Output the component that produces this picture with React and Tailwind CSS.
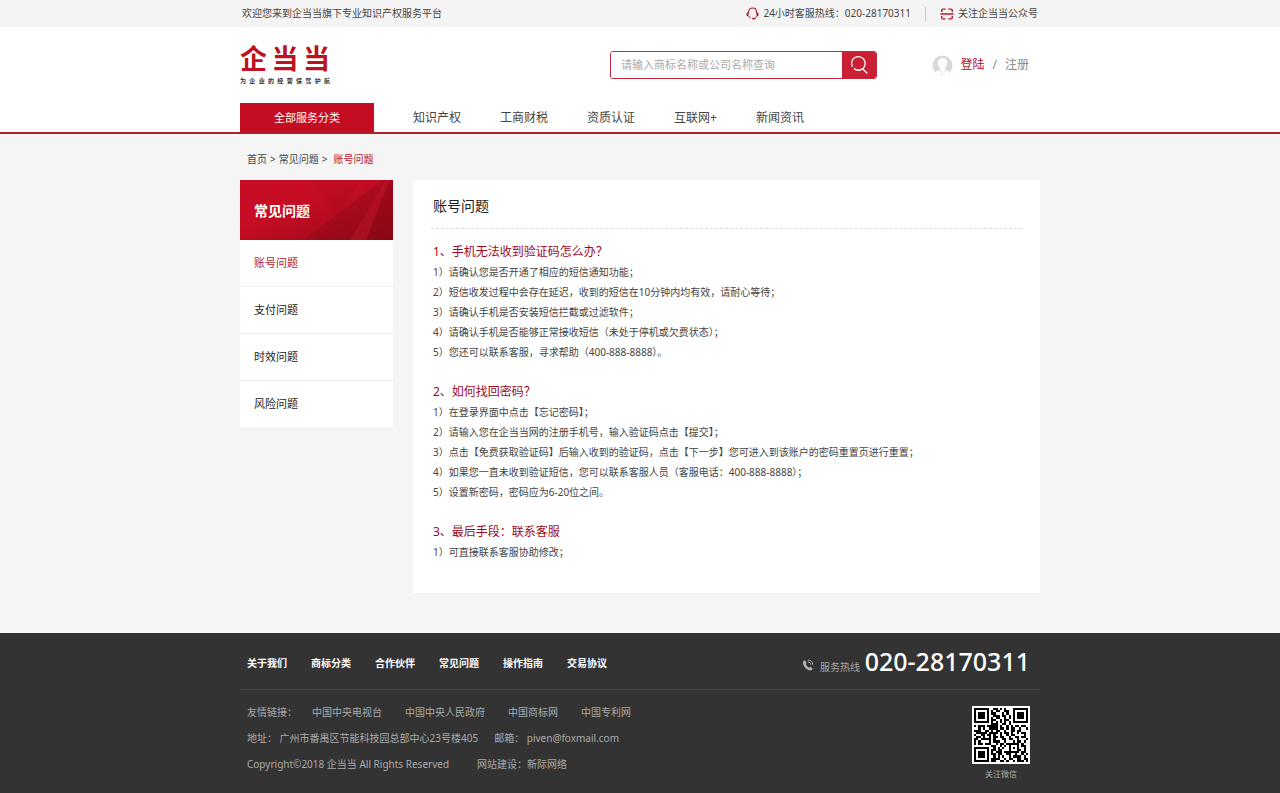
const NAV = ["知识产权", "工商财税", "资质认证", "互联网+", "新闻资讯"];

const SIDE = ["账号问题", "支付问题", "时效问题", "风险问题"];

const FAQ = [
  {
    title: "1、手机无法收到验证码怎么办？",
    items: [
      "1）请确认您是否开通了相应的短信通知功能；",
      "2）短信收发过程中会存在延迟，收到的短信在10分钟内均有效，请耐心等待；",
      "3）请确认手机是否安装短信拦截或过滤软件；",
      "4）请确认手机是否能够正常接收短信（未处于停机或欠费状态）；",
      "5）您还可以联系客服，寻求帮助（400-888-8888）。",
    ],
  },
  {
    title: "2、如何找回密码？",
    items: [
      "1）在登录界面中点击【忘记密码】；",
      "2）请输入您在企当当网的注册手机号，输入验证码点击【提交】；",
      "3）点击【免费获取验证码】后输入收到的验证码，点击【下一步】您可进入到该账户的密码重置页进行重置；",
      "4）如果您一直未收到验证短信，您可以联系客服人员（客服电话：400-888-8888）；",
      "5）设置新密码，密码应为6-20位之间。",
    ],
  },
  {
    title: "3、最后手段：联系客服",
    items: ["1）可直接联系客服协助修改；"],
  },
];

const FOOT_NAV = ["关于我们", "商标分类", "合作伙伴", "常见问题", "操作指南", "交易协议"];
const FRIENDS = ["中国中央电视台", "中国中央人民政府", "中国商标网", "中国专利网"];

const QR = [
  "#######..##.#.#...#######",
  "#.....#.#.##..##..#.....#",
  "#.###.#.##...#.#..#.###.#",
  "#.###.#..###.##.#.#.###.#",
  "#.###.#.#.##..#.#.#.###.#",
  "#.....#.##..#.##..#.....#",
  "#######.#.#.#.#.#.#######",
  "........###..##.#........",
  "#.###.#####.#..#.#.##.##.",
  "..#.#..####.##.#.##..#..#",
  "###..##.#.##..#..##.##...",
  ".#####.####.#.##.#..#.##.",
  "#..##.##.#..#..#.##....#.",
  ".##.#..#.##.##..#..##.##.",
  "##.#####.#...##.##..#...#",
  "#.#....#.###..#...#.##.#.",
  "#.##.###..#.##.######.#..",
  "........##..#.#.#...#.##.",
  "#######..#.#.#..#.#.#..#.",
  "#.....#.##.##...#...##.#.",
  "#.###.#.#.###.#######.##.",
  "#.###.#.##.##..##..#..#.#",
  "#.###.#..#.#.#..#.####.#.",
  "#.....#.####..#.##..##.##",
  "#######.##..##.#..#.###.#",
];

function HeadsetIcon() {
  return (
    <svg width="13" height="13" viewBox="0 0 13 13" fill="none" stroke="#a8182c" strokeLinecap="round" aria-hidden="true">
      <path d="M2.500 6V4.900C2.500 2.700 4.200 1 6.500 1s4 1.700 4 3.900V6" strokeWidth="1.100" />
      <path d="M1.500 6.400v1.800M11.500 6.400v1.800" strokeWidth="1.900" />
      <path d="M2.600 9c.3.900.9 1.500 1.700 1.900M10.800 9c-.3 1.300-1.100 2.100-2.400 2.500" strokeWidth="1" />
      <path d="M7 11.600h1.200" strokeWidth="1.700" />
    </svg>
  );
}

function ScanIcon() {
  return (
    <svg width="14" height="12" viewBox="0 0 14 12" fill="none" stroke="#b5182c" strokeWidth="1.400" aria-hidden="true">
      <path d="M1.700 4V2.400c0-.8.500-1.300 1.300-1.300h2.600M8.400 1.100H11c.8 0 1.300.5 1.300 1.300V4M12.300 8v1.600c0 .8-.5 1.300-1.300 1.300H8.400M5.600 10.900H3c-.8 0-1.300-.5-1.300-1.300V8M.4 6h13.200" />
    </svg>
  );
}

function SearchIcon() {
  return (
    <svg width="20" height="20" viewBox="0 0 20 20" fill="none" stroke="#fff" strokeWidth="1.200" strokeLinecap="round" aria-hidden="true">
      <path d="M3.300 11.500A6.800 6.800 0 1 1 5.500 14" />
      <path d="M5.500 14A6.800 6.800 0 0 0 13.500 13.700L18 18" />
    </svg>
  );
}

function Avatar() {
  return (
    <svg width="21" height="21" viewBox="0 0 21 21" aria-hidden="true">
      <circle cx="10.500" cy="10.500" r="10" fill="#d9d9d9" />
      <path
        d="M10.500 3.300c-3 0-4.700 2-4.700 4.800 0 2.200 1 4 2.500 5v1.500c-1.700.7-3.700 1.200-4.900 2.900a10 10 0 0 0 14.200 0c-1.200-1.700-3.200-2.200-4.900-2.900v-1.500c1.500-1 2.500-2.800 2.500-5 0-2.800-1.700-4.800-4.700-4.800z"
        fill="#fff"
      />
      <path d="M8.300 15l1 4.500M12.700 15l-1 4.500" stroke="#d9d9d9" strokeWidth=".7" />
    </svg>
  );
}

function PhoneIcon() {
  return (
    <svg width="12" height="12" viewBox="0 0 12 12" fill="none" aria-hidden="true">
      <path
        d="M2.700 1.200 1.200 2.300c-.7 2 .3 4.600 2 6.500s4.300 3 6.200 2.500l1.400-1.500-2.300-2-1.500.9C5.600 8 4.300 6.500 3.800 5L4.700 3.600z"
        fill="#b5b5b5"
      />
      <path d="M5.800 1c2.800-.2 5 1.900 5 4.800M5.900 3c1.700 0 2.900 1.100 3 2.800" stroke="#b5b5b5" strokeWidth=".9" />
    </svg>
  );
}

function QrCode() {
  return (
    <svg width="58" height="58" viewBox="-1 -1 27 27" shapeRendering="crispEdges" role="img" aria-label="关注微信">
      <rect x="-1" y="-1" width="27" height="27" fill="#fff" />
      {QR.map((row, y) =>
        row.split("").map((cell, x) =>
          cell === "#" ? <rect key={`${x}-${y}`} x={x} y={y} width="1" height="1" fill="#000" /> : null
        )
      )}
    </svg>
  );
}

function TopBar() {
  return (
    <div className="bg-[#f4f4f4] text-[10px] leading-[27px] text-[#444]">
      <div className="mx-auto flex max-w-[800px] items-center px-[2px]">
        <p>欢迎您来到企当当旗下专业知识产权服务平台</p>
        <p className="ml-auto flex items-center gap-1">
          <HeadsetIcon />
          24小时客服热线：020-28170311
        </p>
        <span className="mx-[14px] h-[14px] w-px bg-[#ccc]" />
        <a href="#wechat" className="flex items-center gap-1">
          <ScanIcon />
          关注企当当公众号
        </a>
      </div>
    </div>
  );
}

function Header() {
  return (
    <header className="border-b-2 border-[#b51c28] bg-white">
      <div className="mx-auto max-w-[800px]">
        <div className="flex h-[76px] items-center">
          <a href="#home" className="block w-[90px]">
            <span className="block text-[27px] leading-[28px] font-bold text-[#bd1220] [text-align-last:justify]">
              企当当
            </span>
            <span className="mt-[3px] block text-[6px] leading-[10px] font-bold text-[#333] [text-align-last:justify]">
              为企业的经营保驾护航
            </span>
          </a>
          <form className="ml-[280px] flex h-7 w-[267px] overflow-hidden rounded-[3px] border border-[#c4283c]">
            <input
              type="text"
              aria-label="搜索"
              placeholder="请输入商标名称或公司名称查询"
              className="min-w-0 flex-1 bg-white px-[10px] text-[11px] outline-none placeholder:text-[#aaa]"
            />
            <button type="button" aria-label="搜索" className="flex w-[34px] items-center justify-center bg-[#c92035]">
              <SearchIcon />
            </button>
          </form>
          <div className="mr-[11px] ml-auto flex items-center gap-2 text-[12px] text-[#888]">
            <Avatar />
            <a href="#login" className="text-[#b5112a]">
              登陆
            </a>
            <span>/</span>
            <a href="#register">注册</a>
          </div>
        </div>
        <nav className="flex items-center gap-[39px] text-[12px] leading-[28px] text-[#444]">
          <a href="#all" className="w-[134px] bg-[#c40d23] pt-px text-center text-[11px] text-white">
            全部服务分类
          </a>
          {NAV.map((item) => (
            <a key={item} href="#nav" className="pt-px">
              {item}
            </a>
          ))}
        </nav>
      </div>
    </header>
  );
}

function Sidebar() {
  return (
    <aside className="w-[153px] shrink-0">
      <div className="relative h-[60px] bg-linear-to-br from-[#c60d23] from-40% to-[#96091a]">
        <svg className="absolute inset-0 h-full w-full" viewBox="0 0 153 60" preserveAspectRatio="none" aria-hidden="true">
          <path d="M64 60 142 0h11v60z" fill="#7d0815" opacity=".28" />
          <path d="M72 0h50L96 36z" fill="#8f0a1a" opacity=".12" />
          <path d="M110 60 146 0h3L126 60z" fill="#e0273b" opacity=".2" />
          <path d="M126 60 151 0h2v60z" fill="#6d0610" opacity=".15" />
        </svg>
        <h2 className="relative px-[14px] text-[14px] leading-[62px] font-bold text-white">常见问题</h2>
      </div>
      <ul className="divide-y divide-[#eee] bg-white text-[11px] leading-[46px] text-[#222]">
        {SIDE.map((item, index) => (
          <li key={item}>
            <a href="#faq" className={index === 0 ? "block px-[14px] text-[#b5182c]" : "block px-[14px]"}>
              {item}
            </a>
          </li>
        ))}
      </ul>
    </aside>
  );
}

function FaqPanel() {
  return (
    <section className="min-w-0 flex-1 bg-white px-[18px] pb-[31px]">
      <h1 className="border-b border-dashed border-[#ddd] px-[2px] pt-[6px] pb-[2px] text-[14px] leading-[40px] text-[#222]">
        账号问题
      </h1>
      <div className="space-y-5 px-[2px] pt-[13px]">
        {FAQ.map((group) => (
          <div key={group.title} className="text-[10px] leading-5 text-[#444]">
            <h3 className="text-[12px] leading-5 text-[#9c0a1e]">{group.title}</h3>
            {group.items.map((item) => (
              <p key={item}>{item}</p>
            ))}
          </div>
        ))}
      </div>
    </section>
  );
}

function Footer() {
  return (
    <footer className="bg-[#333] pb-[10px] text-[10px] leading-5 text-[#aaa]">
      <div className="mx-auto max-w-[800px]">
        <div className="flex h-[57px] items-center justify-between border-b border-[#444] pr-[10px] pl-[7px]">
          <nav className="flex gap-6 pt-1 font-bold text-white">
            {FOOT_NAV.map((item) => (
              <a key={item} href="#foot">
                {item}
              </a>
            ))}
          </nav>
          <p className="flex items-baseline gap-[6px]">
            <PhoneIcon />
            <span>
              服务热线 <strong className="pl-[2px] text-[25px] leading-[30px] font-medium text-white">020-28170311</strong>
            </span>
          </p>
        </div>
        <div className="flex justify-between pr-[10px] pl-[7px]">
          <div className="space-y-[6px] pt-3">
            <p className="flex gap-[23px]">
              <span className="-mr-2">友情链接：</span>
              {FRIENDS.map((item) => (
                <a key={item} href="#friend">
                  {item}
                </a>
              ))}
            </p>
            <p className="flex gap-4">
              <span>地址： 广州市番禺区节能科技园总部中心23号楼405</span>
              <span>邮箱： piven@foxmail.com</span>
            </p>
            <p className="flex gap-7">
              <span>Copyright©2018 企当当 All Rights Reserved</span>
              <span>网站建设：新际网络</span>
            </p>
          </div>
          <div className="flex flex-col items-center pt-4 text-[8px]">
            <QrCode />
            <span>关注微信</span>
          </div>
        </div>
      </div>
    </footer>
  );
}

export default function App() {
  return (
    <div lang="zh-CN" className="min-h-screen bg-[#f5f5f5] font-['Noto_Sans','Noto_Sans_CJK_SC',sans-serif]">
      <TopBar />
      <Header />
      <main className="mx-auto max-w-[800px] pb-10">
        <nav className="flex gap-[3px] px-[7px] pt-[15px] pb-[11px] text-[10px] leading-5 text-[#444]">
          <a href="#home">首页</a>
          <span>&gt;</span>
          <a href="#faq">常见问题</a>
          <span>&gt;</span>
          <a href="#account" className="pl-[3px] text-[#b5112a]">
            账号问题
          </a>
        </nav>
        <div className="flex items-start gap-5">
          <Sidebar />
          <FaqPanel />
        </div>
      </main>
      <Footer />
    </div>
  );
}
